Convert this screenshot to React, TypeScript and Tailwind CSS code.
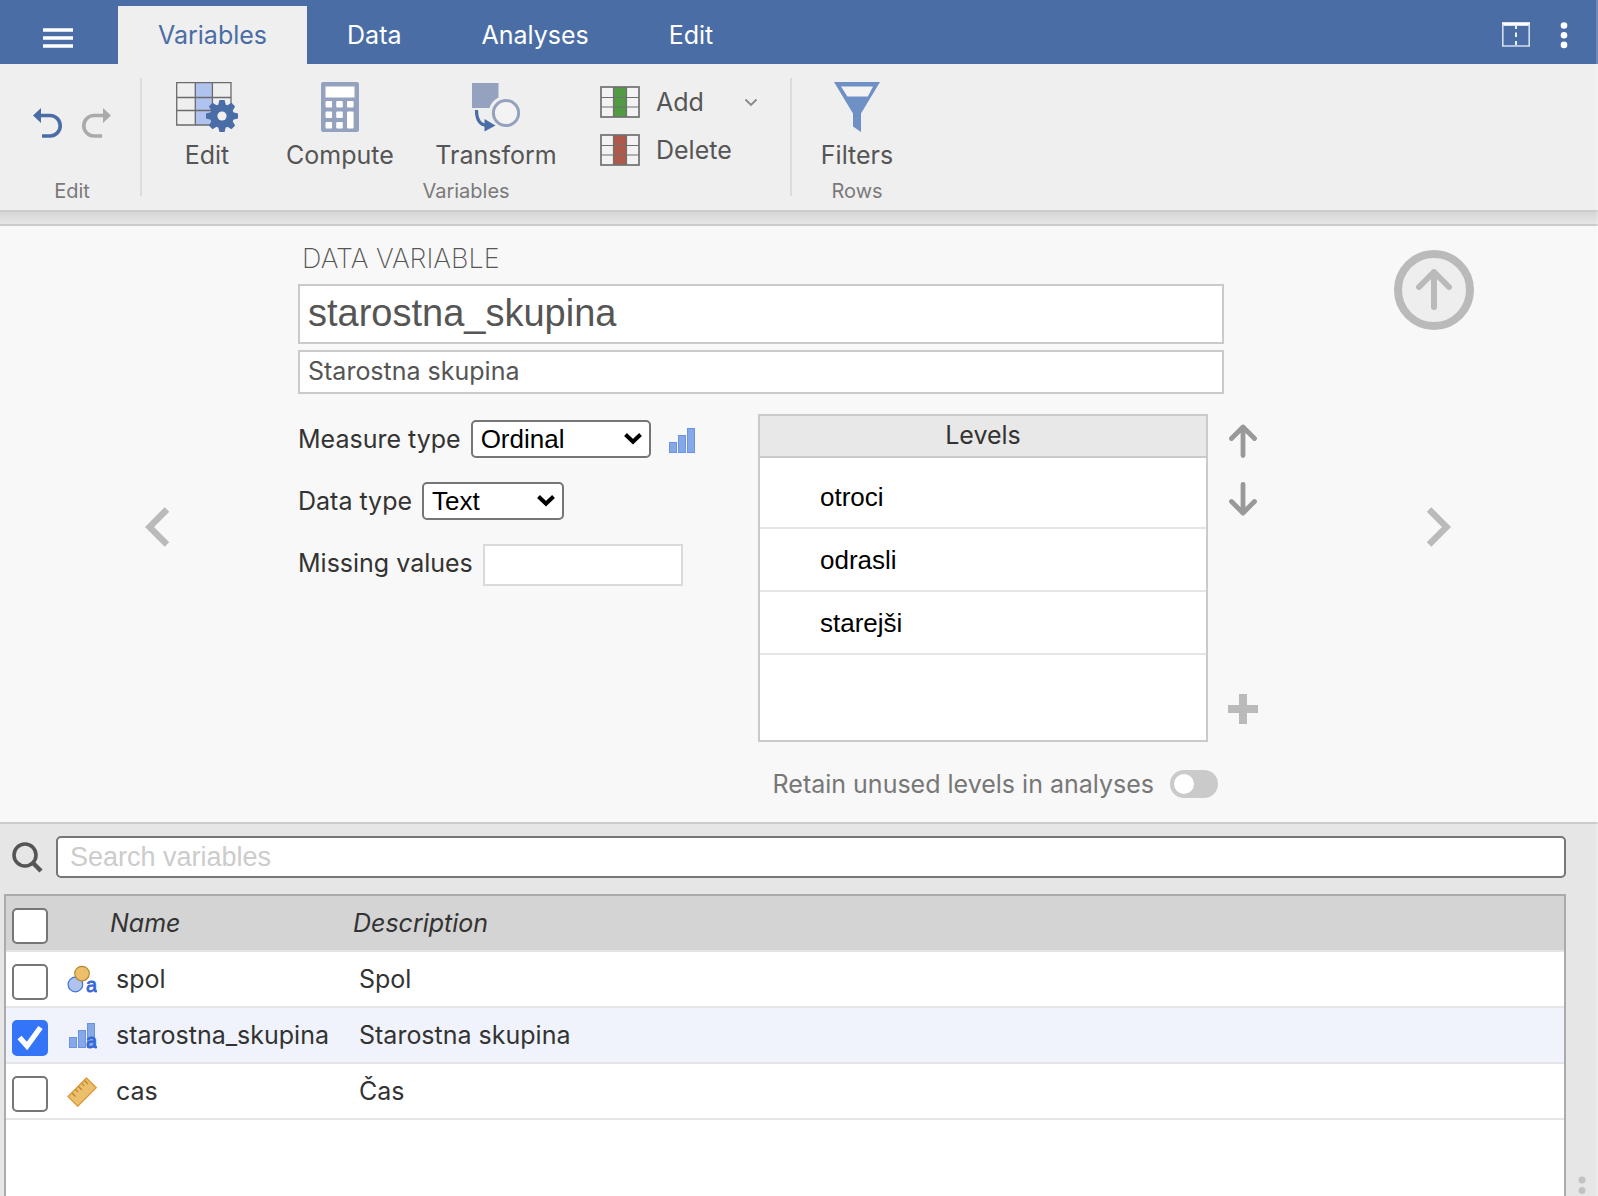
import { useState } from 'react';

const tabs = ['Variables', 'Data', 'Analyses', 'Edit'];
const levels = ['otroci', 'odrasli', 'starejši'];

const variables = [
  { name: 'spol', description: 'Spol', icon: NominalIcon },
  { name: 'starostna_skupina', description: 'Starostna skupina', icon: OrdinalTextIcon },
  { name: 'cas', description: 'Čas', icon: ContinuousIcon }
];

function UndoIcon() {
  return (
    <svg width="30" height="32" viewBox="0 0 30 32">
      <path d="M0 7.5 L8 0 V15 Z" fill="#4a6da7" />
      <path d="M7 7.5 H17 A10.2 10.2 0 0 1 17 28 H9" fill="none" stroke="#4a6da7" strokeWidth="3.6" />
    </svg>
  );
}

function RedoIcon() {
  return (
    <svg width="30" height="32" viewBox="0 0 30 32">
      <path d="M30 7.5 L22 0 V15 Z" fill="#aaaaaa" />
      <path d="M23 7.5 H13 A10.2 10.2 0 0 0 13 28 H21" fill="none" stroke="#aaaaaa" strokeWidth="3.6" />
    </svg>
  );
}

function EditIcon() {
  return (
    <svg width="62" height="50" viewBox="0 0 62 50">
      <rect x="19" y="1" width="17" height="42" fill="#afc3ee" />
      <path
        d="M0.7 0.7 H55 V43 H0.7 Z M19.3 0.7 V43 M36.4 0.7 V43 M0.7 15.5 H55 M0.7 28.5 H55"
        fill="none"
        stroke="#6b6b6b"
        strokeWidth="1.3"
      />
      <g transform="translate(46 34)" fill="#4a6da7">
        <circle r="12" />
        {[0, 45, 90, 135, 180, 225, 270, 315].map((angle) => (
          <path key={angle} d="M-4 -10 L-2.6 -16 H2.6 L4 -10 Z" transform={`rotate(${angle})`} />
        ))}
        <circle r="4.6" fill="#efefef" />
      </g>
    </svg>
  );
}

function ComputeIcon() {
  return (
    <svg width="38" height="50" viewBox="0 0 38 50">
      <rect width="38" height="50" rx="2" fill="#94a2bf" />
      <g fill="#ffffff">
        <rect x="4.5" y="4.5" width="29" height="11" />
        {[19, 29.5, 40].map((y) => (
          <g key={y}>
            <rect x="4.5" y={y} width="6.6" height="6.6" rx="1" />
            <rect x="15.2" y={y} width="6.6" height="6.6" rx="1" />
          </g>
        ))}
        <rect x="26" y="19" width="6.6" height="6.6" rx="1" />
        <rect x="26" y="29.5" width="6.6" height="17" rx="1" />
      </g>
    </svg>
  );
}

function TransformIcon() {
  return (
    <svg width="50" height="50" viewBox="0 0 50 50">
      <path d="M1 1 H27.5 V15.5 A17.5 17.5 0 0 0 18.5 26 H1 Z" fill="#94a2bf" />
      <circle cx="35" cy="31" r="12.6" fill="#f3f3f3" stroke="#94a2bf" strokeWidth="3" />
      <path d="M5.5 28 C5.5 37 8 43 16 43.4" fill="none" stroke="#4a6da7" strokeWidth="3.2" />
      <path d="M13.5 37 L24.5 43.6 L13.5 49.6 Z" fill="#4a6da7" />
    </svg>
  );
}

function ColumnIcon({ color }: { color: string }) {
  return (
    <svg width="40" height="32" viewBox="0 0 40 32">
      <rect x="1" y="1" width="38" height="30" fill="#f3f3f3" />
      <rect x="13.5" y="1" width="13" height="30" fill={color} />
      <path d="M13.5 1 V31 M26.5 1 V31 M1 11.5 H39 M1 21 H39" stroke="#707070" strokeWidth="1.2" />
      <rect x="1" y="1" width="38" height="30" fill="none" stroke="#707070" strokeWidth="1.7" />
    </svg>
  );
}

function FilterIcon() {
  return (
    <svg width="46" height="50" viewBox="0 0 46 50">
      <path d="M0 0 H46 L27 31.5 V50 L19 44.5 V31.5 Z" fill="#6f90c4" />
      <path d="M7 4.5 H39 L33.8 14.5 H13.4 Z" fill="#f3f3f3" />
    </svg>
  );
}

function Bars() {
  return (
    <g fill="#85a8e8" stroke="#6a93e3" strokeWidth="1">
      <rect x="0.5" y="14.5" width="7" height="10" />
      <rect x="9.5" y="7.5" width="7" height="17" />
      <rect x="18.5" y="0.5" width="7" height="24" />
    </g>
  );
}

function OrdinalIcon() {
  return (
    <svg width="26" height="25" viewBox="0 0 26 25">
      <Bars />
    </svg>
  );
}

function TypeLetter() {
  return (
    <text x="19" y="27" fontSize="20" fontFamily="Liberation Sans, Arial, sans-serif" fill="#3468d8" stroke="#3468d8" strokeWidth="0.8">
      a
    </text>
  );
}

function NominalIcon() {
  return (
    <svg width="30" height="30" viewBox="0 0 30 30">
      <circle cx="8.4" cy="19.5" r="7.3" fill="#afc3ee" stroke="#3f72e0" strokeWidth="1.2" />
      <circle cx="15" cy="8.6" r="7.3" fill="#ebbf6c" stroke="#b98730" strokeWidth="1.2" />
      <TypeLetter />
    </svg>
  );
}

function OrdinalTextIcon() {
  return (
    <svg width="30" height="30" viewBox="0 0 30 30">
      <g transform="translate(2 2)">
        <Bars />
      </g>
      <TypeLetter />
    </svg>
  );
}

function ContinuousIcon() {
  return (
    <svg width="30" height="30" viewBox="0 0 30 30">
      <path d="M19.5 1 L29.2 10.7 L10.7 29.2 L1 19.5 Z" fill="#ebbf6c" stroke="#dc9a35" strokeWidth="1.3" />
      <path
        d="M5 16 L8.5 19.5 M8.5 12.5 L11 15 M11.5 9.5 L15 13 M14.8 6.3 L17.3 8.8 M17.5 3.5 L21 7"
        stroke="#b98730"
        strokeWidth="1.2"
      />
    </svg>
  );
}

function ArrowIcon({ down = false }: { down?: boolean }) {
  return (
    <svg width="30" height="34" viewBox="0 0 30 34" className={down ? 'rotate-180' : ''}>
      <path
        d="M15 31.5 V3 M3.5 14.5 L15 3 L26.5 14.5"
        fill="none"
        stroke="#999999"
        strokeWidth="4.8"
        strokeLinecap="round"
        strokeLinejoin="round"
      />
    </svg>
  );
}

function NavChevron({ next = false }: { next?: boolean }) {
  return (
    <svg width="24" height="40" viewBox="0 0 24 40" className={next ? 'rotate-180' : ''}>
      <path d="M22 2.5 L4.5 20 L22 37.5" fill="none" stroke="#bababa" strokeWidth="6.5" />
    </svg>
  );
}

interface DropdownProps {
  id: string;
  label: string;
  options: string[];
  className: string;
}

function Dropdown({ id, label, options, className }: DropdownProps) {
  return (
    <>
      <label htmlFor={id} className="leading-[38px]">{label}</label>
      <div className="relative flex">
        <select
          id={id}
          className={`h-[38px] appearance-none rounded-[5px] border-2 border-[#767676] bg-white pl-2 font-['Liberation_Sans',Arial,sans-serif] text-[26px] leading-8 text-black ${className}`}
        >
          {options.map((option) => (
            <option key={option}>{option}</option>
          ))}
        </select>
        <svg width="20" height="14" viewBox="0 0 20 14" className="pointer-events-none absolute right-2 top-3">
          <path d="M2.5 2.5 L10 9.8 L17.5 2.5" fill="none" stroke="#000000" strokeWidth="4" />
        </svg>
      </div>
    </>
  );
}

interface CheckboxProps {
  label: string;
  checked: boolean;
  onChange: () => void;
}

function Checkbox({ label, checked, onChange }: CheckboxProps) {
  return (
    <div className="relative size-9">
      <input
        type="checkbox"
        aria-label={label}
        checked={checked}
        onChange={onChange}
        className="block size-9 appearance-none rounded-[5px] border-2 border-[#767676] bg-white checked:border-[#3375f6] checked:bg-[#3375f6]"
      />
      {checked && (
        <svg width="36" height="36" viewBox="0 0 36 36" className="pointer-events-none absolute left-0 top-0">
          <path d="M7.5 17.5 L15 26 L28.5 7.5" fill="none" stroke="#ffffff" strokeWidth="5.4" />
        </svg>
      )}
    </div>
  );
}

function Header() {
  const [activeTab, setActiveTab] = useState('Variables');

  return (
    <header className="flex h-16 shrink-0 bg-[#4a6da5] text-[25px] text-white">
      <button aria-label="Menu" className="flex w-[118px] items-center justify-center pr-[2px] pt-3">
        <svg width="30" height="20" viewBox="0 0 30 20">
          <path d="M0 2 H30 M0 10 H30 M0 18 H30" stroke="#ffffff" strokeWidth="3.4" />
        </svg>
      </button>
      <nav className="flex pt-[6px]">
        {tabs.map((tab) => (
          <button
            key={tab}
            onClick={() => setActiveTab(tab)}
            className={`px-10 pt-[2px] ${activeTab === tab ? 'bg-[#efefef] text-[#4a6da5]' : ''}`}
          >
            {tab}
          </button>
        ))}
      </nav>
      <div className="ml-auto flex items-center gap-[30px] pr-[30px] pt-[6px]">
        <button aria-label="Split view">
          <svg width="28" height="26" viewBox="0 0 28 26" className="block">
            <path d="M0 2 H28" stroke="#ffffff" strokeWidth="3.6" />
            <path d="M0.8 2 V24 H27.2 V2" fill="none" stroke="#d5deee" strokeWidth="1.6" />
            <path d="M14 4 V7 M14 10.5 V15 M14 19 V23" stroke="#ffffff" strokeWidth="1.8" />
          </svg>
        </button>
        <button aria-label="More">
          <svg width="8" height="28" viewBox="0 0 8 28" className="block" fill="#ffffff">
            <circle cx="4" cy="4.5" r="3.3" />
            <circle cx="4" cy="14.2" r="3.3" />
            <circle cx="4" cy="23.9" r="3.3" />
          </svg>
        </button>
      </div>
    </header>
  );
}

function Ribbon() {
  const big = 'flex flex-col items-center gap-[7px]';
  const caption = 'text-center text-[20px] leading-[10px] text-[#7a7a7a]';

  return (
    <div className="flex h-[148px] shrink-0 border-b-2 border-[#cbcbcb] bg-[#efefef] py-[14px] text-[25px] leading-8 text-[#555555]">
      <div className="flex w-[142px] flex-col justify-between border-r-2 border-[#dcdcdc] pl-1">
        <div className="flex justify-center gap-[18px] pt-[30px]">
          <button aria-label="Undo"><UndoIcon /></button>
          <button aria-label="Redo"><RedoIcon /></button>
        </div>
        <div className={caption}>Edit</div>
      </div>
      <div className="flex w-[650px] flex-col justify-between border-r-2 border-[#dcdcdc]">
        <div className="flex pl-[10px] pt-1">
          <button className={`${big} w-[110px]`}><EditIcon />Edit</button>
          <button className={`${big} w-[156px]`}><ComputeIcon />Compute</button>
          <button className={`${big} w-[156px]`}><TransformIcon />Transform</button>
          <div className="flex flex-col gap-4 pl-[26px] pt-1">
            <button className="flex h-8 items-center gap-4 leading-7">
              <ColumnIcon color="#539a44" />
              Add
              <svg width="14" height="9" viewBox="0 0 14 9" className="ml-6">
                <path d="M1.5 1.5 L7 7 L12.5 1.5" fill="none" stroke="#888888" strokeWidth="1.8" />
              </svg>
            </button>
            <button className="flex h-8 items-center gap-4 leading-7">
              <ColumnIcon color="#ae5a4b" />
              Delete
            </button>
          </div>
        </div>
        <div className={caption}>Variables</div>
      </div>
      <div className="flex w-[130px] flex-col justify-between">
        <button className={`${big} pt-1`}><FilterIcon />Filters</button>
        <div className={caption}>Rows</div>
      </div>
    </div>
  );
}

function VariableEditor() {
  return (
    <section className="flex shrink-0 border-y-2 border-[#cbcbcb] bg-[#f8f8f8] text-[25px] leading-8 text-[#333333]">
      <div className="flex w-[298px] items-center pl-[145px] pt-[6px]">
        <button aria-label="Previous variable"><NavChevron /></button>
      </div>
      <div className="min-w-0 flex-1 pb-6 pt-4">
        <h1 className="mb-2 pl-1 text-[27px] font-extralight leading-[34px] text-[#555555]">DATA VARIABLE</h1>
        <div className="mr-[34px] flex flex-col gap-[6px] text-[#555555]">
          <input
            aria-label="Variable name"
            defaultValue="starostna_skupina"
            className="h-[60px] w-full border-2 border-[#cacaca] bg-white px-2 pb-[2px] font-['Liberation_Sans',Arial,sans-serif] text-[38px]"
          />
          <input
            aria-label="Description"
            defaultValue="Starostna skupina"
            className="h-11 w-full border-2 border-[#cacaca] bg-white px-2 pb-[2px]"
          />
        </div>
        <div className="mt-5 flex">
          <div className="flex flex-1 flex-col gap-6 pt-[6px]">
            <div className="flex items-center gap-[10px]">
              <Dropdown
                id="measure"
                label="Measure type"
                options={['Ordinal', 'Nominal', 'Continuous', 'ID']}
                className="w-[180px]"
              />
              <div className="pl-2 pt-[2px]">
                <OrdinalIcon />
              </div>
            </div>
            <div className="flex items-center gap-[10px]">
              <Dropdown id="datatype" label="Data type" options={['Text', 'Integer', 'Decimal']} className="w-[142px]" />
            </div>
            <div className="flex items-start gap-[10px]">
              <label htmlFor="missing" className="leading-[38px]">Missing values</label>
              <input id="missing" className="h-[42px] w-[200px] border-2 border-[#dadada] bg-white px-2" />
            </div>
          </div>
          <div className="flex h-[328px] w-[450px] flex-col border-2 border-[#cacaca] bg-white">
            <h2 className="h-[42px] border-b-2 border-[#cacaca] bg-[#e8e8e8] pt-[3px] text-center">Levels</h2>
            <ul className="pt-2 font-['Liberation_Sans',Arial,sans-serif] text-[26px] text-black">
              {levels.map((level) => (
                <li key={level} className="flex h-[63px] items-center border-b-2 border-[#e5e5e5] pl-[60px]">
                  {level}
                </li>
              ))}
            </ul>
          </div>
          <div className="ml-5 flex w-[30px] flex-col items-center pb-[18px] pt-[10px]">
            <button aria-label="Move level up"><ArrowIcon /></button>
            <button aria-label="Move level down" className="mt-6"><ArrowIcon down /></button>
            <button aria-label="Add level" className="mt-auto">
              <svg width="30" height="30" viewBox="0 0 30 30" className="block">
                <path d="M15 0 V30 M0 15 H30" stroke="#bababa" strokeWidth="8" />
              </svg>
            </button>
          </div>
        </div>
        <div className="mr-10 mt-7 flex h-7 items-center justify-end gap-4 text-[#777777]">
          <label htmlFor="retain" className="leading-7">Retain unused levels in analyses</label>
          <input
            id="retain"
            type="checkbox"
            role="switch"
            className="flex h-7 w-12 appearance-none items-center rounded-full bg-[#cacaca] px-1 before:size-5 before:rounded-full before:bg-white checked:justify-end checked:bg-[#4a6da5]"
          />
        </div>
      </div>
      <div className="flex w-[340px] flex-col">
        <button
          aria-label="Close editor"
          className="ml-[136px] mt-6 flex size-20 items-center justify-center rounded-full border-8 border-[#bababa] bg-[#eeeeee]"
        >
          <svg width="36" height="42" viewBox="0 0 36 42">
            <path
              d="M18 38 V3 M3 18 L18 3 L33 18"
              fill="none"
              stroke="#bababa"
              strokeWidth="6"
              strokeLinecap="round"
              strokeLinejoin="round"
            />
          </svg>
        </button>
        <button aria-label="Next variable" className="ml-[169px] mt-[177px] w-6"><NavChevron next /></button>
      </div>
    </section>
  );
}

function VariableList() {
  const [selected, setSelected] = useState<string[]>(['starostna_skupina']);

  const toggle = (name: string) => {
    setSelected(selected.includes(name) ? selected.filter((n) => n !== name) : [...selected, name]);
  };

  const allSelected = selected.length === variables.length;

  return (
    <section className="flex min-h-0 flex-1 bg-[#e6e6e6] text-[25px] leading-8 text-[#333333]">
      <div className="flex min-w-0 flex-1 flex-col pl-1 pt-3">
        <div className="flex items-center gap-[13px] pl-2">
          <svg width="31" height="31" viewBox="0 0 31 31">
            <circle cx="13" cy="13" r="11" fill="none" stroke="#555555" strokeWidth="3.6" />
            <path d="M20.5 20.5 L29 29" stroke="#555555" strokeWidth="4.4" />
          </svg>
          <input
            aria-label="Search variables"
            placeholder="Search variables"
            className="h-[42px] min-w-0 flex-1 rounded-[5px] border-2 border-[#767676] bg-white px-3 font-['Liberation_Sans',Arial,sans-serif] text-[27px] placeholder:text-[#cccccc]"
          />
        </div>
        <div className="mt-4 flex-1 border-2 border-b-0 border-[#ababab] bg-white">
          <table className="w-full table-fixed text-left">
            <colgroup>
              <col className="w-[54px]" />
              <col className="w-[50px]" />
              <col className="w-[243px]" />
              <col />
            </colgroup>
            <thead>
              <tr className="h-[55px] border-b-2 border-[#e5e5e5] bg-[#d4d4d4] italic">
                <th className="pl-[6px] pt-[6px]">
                  <Checkbox
                    label="Select all"
                    checked={allSelected}
                    onChange={() => setSelected(allSelected ? [] : variables.map((v) => v.name))}
                  />
                </th>
                <th />
                <th className="font-normal">Name</th>
                <th className="font-normal">Description</th>
              </tr>
            </thead>
            <tbody>
              {variables.map(({ name, description, icon: Icon }) => (
                <tr
                  key={name}
                  className={`h-14 border-b-2 border-[#e5e5e5] ${selected.includes(name) ? 'bg-[#f0f3fb]' : ''}`}
                >
                  <td className="pl-[6px] pt-[6px]">
                    <Checkbox label={name} checked={selected.includes(name)} onChange={() => toggle(name)} />
                  </td>
                  <td className="pl-[7px] pt-[2px]"><Icon /></td>
                  <td className="pl-[6px]">{name}</td>
                  <td className="pl-[6px]">{description}</td>
                </tr>
              ))}
            </tbody>
          </table>
        </div>
      </div>
      <div className="flex w-8 items-end justify-center">
        <svg width="8" height="20" viewBox="0 0 8 20" className="block" fill="#c2c2c2">
          <circle cx="4" cy="4" r="3.5" />
          <circle cx="4" cy="14.4" r="3.5" />
        </svg>
      </div>
    </section>
  );
}

const App = () => {
  return (
    <div className="relative flex h-screen flex-col overflow-hidden bg-[#e6e6e6] font-[Inter,sans-serif]">
      <Header />
      <Ribbon />
      <div className="h-3 shrink-0 bg-linear-to-b from-[#d6d6d6] to-[#e6e6e6]" />
      <VariableEditor />
      <VariableList />
      <div className="pointer-events-none absolute inset-y-0 right-0 w-[2px] bg-white/20" />
    </div>
  );
};

export default App;
